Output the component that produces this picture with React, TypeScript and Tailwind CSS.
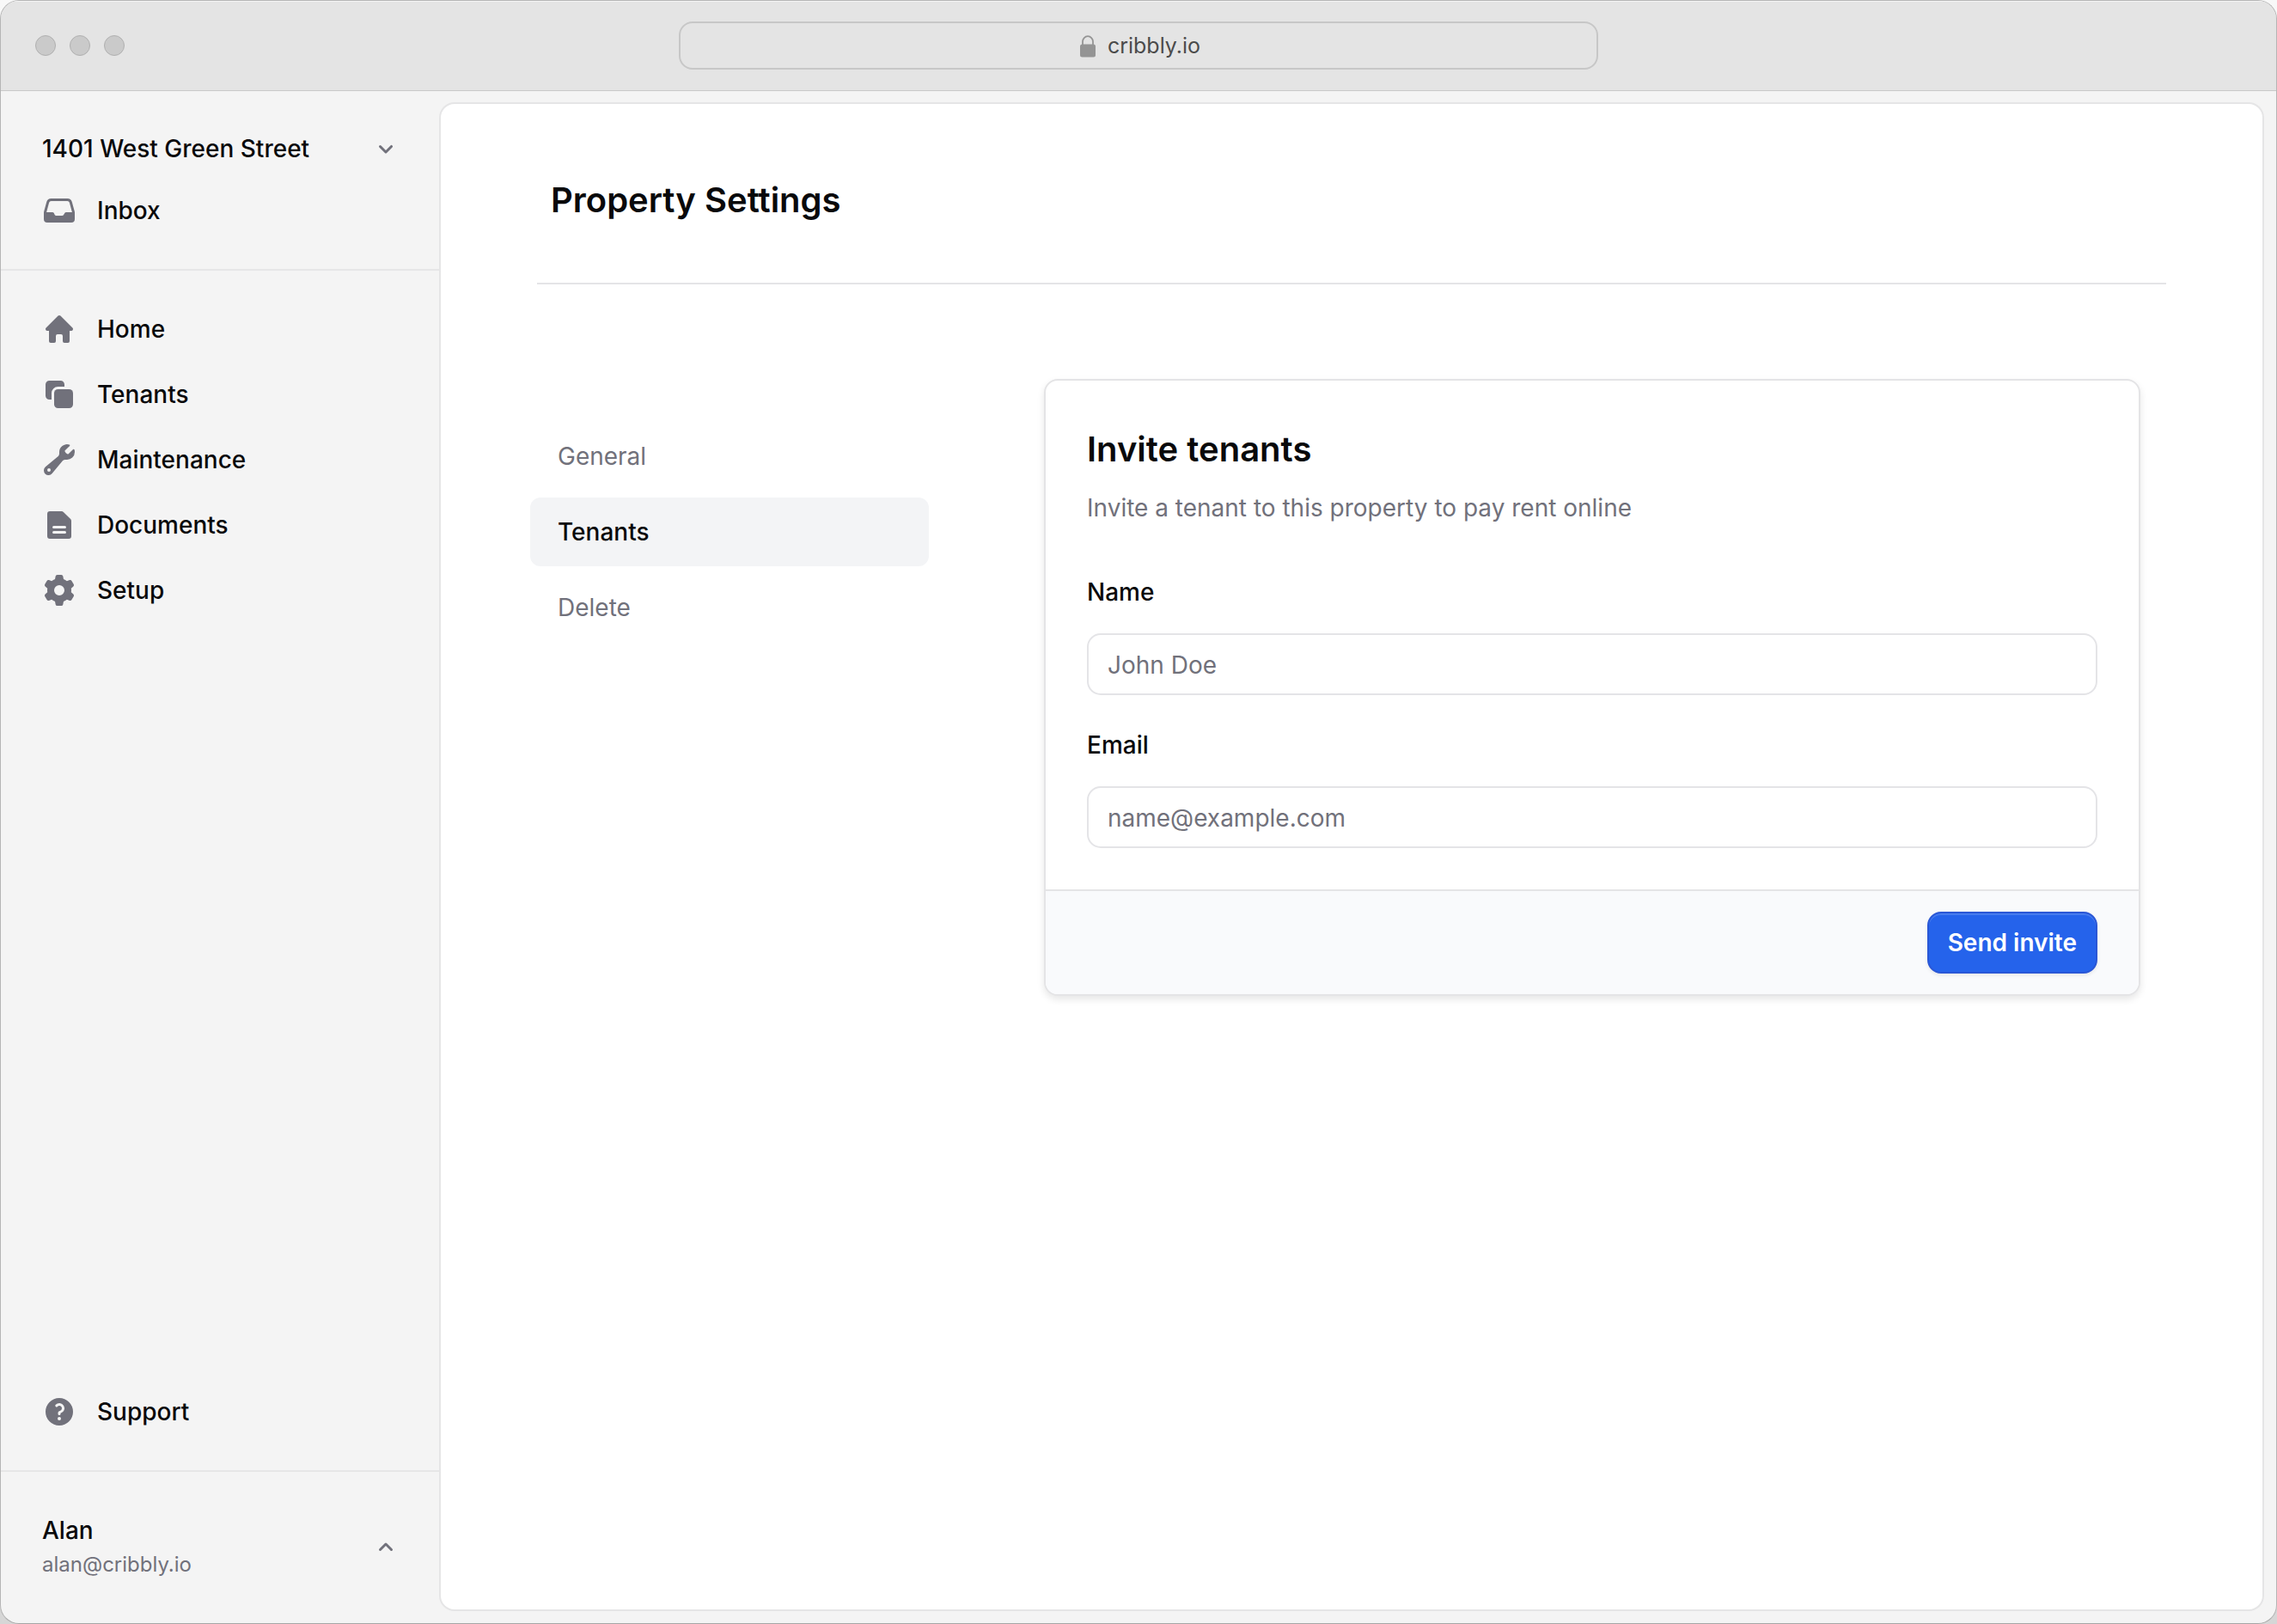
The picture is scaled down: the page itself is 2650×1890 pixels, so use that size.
import type { ComponentType } from "react";
import {
  HiMiniCog6Tooth,
  HiMiniDocumentText,
  HiMiniHome,
  HiMiniInbox,
  HiMiniQuestionMarkCircle,
  HiMiniSquare2Stack,
  HiMiniWrench,
} from "react-icons/hi2";

type Icon = ComponentType<{ className?: string }>;

const mainLinks: { label: string; icon: Icon }[] = [
  { label: "Home", icon: HiMiniHome },
  { label: "Tenants", icon: HiMiniSquare2Stack },
  { label: "Maintenance", icon: HiMiniWrench },
  { label: "Documents", icon: HiMiniDocumentText },
  { label: "Setup", icon: HiMiniCog6Tooth },
];

function SidebarLink({ label, icon: IconComponent }: { label: string; icon: Icon }) {
  return (
    <a href="#" className="flex items-center gap-6 px-4 py-4 leading-10 font-medium">
      <IconComponent className="size-10 shrink-0 text-zinc-500" />
      {label}
    </a>
  );
}

function ChevronDown() {
  return (
    <svg viewBox="0 0 16 16" fill="currentColor" className="size-8 text-zinc-500" aria-hidden="true">
      <path d="M4.22 6.22a.75.75 0 0 1 1.06 0L8 8.94l2.72-2.72a.75.75 0 1 1 1.06 1.06l-3.25 3.25a.75.75 0 0 1-1.06 0L4.22 7.28a.75.75 0 0 1 0-1.06Z" />
    </svg>
  );
}

function ChevronUp() {
  return (
    <svg viewBox="0 0 16 16" fill="currentColor" className="size-8 text-zinc-500" aria-hidden="true">
      <path d="M11.78 9.78a.75.75 0 0 1-1.06 0L8 7.06 5.28 9.78a.75.75 0 0 1-1.06-1.06l3.25-3.25a.75.75 0 0 1 1.06 0l3.25 3.25a.75.75 0 0 1 0 1.06Z" />
    </svg>
  );
}

function LockIcon() {
  return (
    <svg viewBox="0 0 18 26" className="h-[26px] w-[18px]" aria-hidden="true">
      <rect x="0" y="10.5" width="18" height="15" rx="2.5" fill="#949494" />
      <path d="M3 11.5V7.4a6 6.2 0 0 1 12 0v4.1" fill="none" stroke="#949494" strokeWidth="1.8" />
    </svg>
  );
}

function TitleBar() {
  return (
    <header className="relative flex h-[104px] shrink-0 items-center bg-[#e4e4e4] px-10 shadow-[inset_0_1px_0_#f4f4f4,0_1px_0_#c9c9c9]">
      <div className="flex flex-1 gap-4">
        <span className="size-6 rounded-full border border-[#b0b0b0] bg-[#cacaca]" />
        <span className="size-6 rounded-full border border-[#b0b0b0] bg-[#cacaca]" />
        <span className="size-6 rounded-full border border-[#b0b0b0] bg-[#cacaca]" />
      </div>
      <div className="flex h-14 w-full max-w-[1070px] items-center justify-center gap-3.5 rounded-2xl border-2 border-[#c7c7c7] pt-0.5 pl-1 text-[25px] text-[#4b4b4b]">
        <LockIcon />
        cribbly.io
      </div>
      <div className="flex-1" />
    </header>
  );
}

function Sidebar() {
  return (
    <aside className="flex w-[512px] shrink-0 flex-col">
      <div className="border-b-2 border-[#e6e6e7] p-8">
        <button type="button" className="flex w-full items-center justify-between px-4 py-4 leading-10 font-medium">
          1401 West Green Street
          <ChevronDown />
        </button>
        <SidebarLink label="Inbox" icon={HiMiniInbox} />
      </div>
      <nav className="flex flex-1 flex-col gap-1 p-8">
        {mainLinks.map((link) => (
          <SidebarLink key={link.label} {...link} />
        ))}
        <div className="mt-auto">
          <SidebarLink label="Support" icon={HiMiniQuestionMarkCircle} />
        </div>
      </nav>
      <div className="border-t-2 border-[#e6e6e7] p-8">
        <button type="button" className="flex w-full items-center justify-between px-4 py-4 text-left leading-10">
          <span>
            <span className="block font-medium">Alan</span>
            <span className="block text-[24px] leading-10 text-zinc-500">alan@cribbly.io</span>
          </span>
          <ChevronUp />
        </button>
      </div>
    </aside>
  );
}

function Field({ id, label, type, placeholder }: { id: string; label: string; type: string; placeholder: string }) {
  return (
    <div className="flex flex-col gap-6">
      <label htmlFor={id} className="leading-12 font-medium">
        {label}
      </label>
      <input
        id={id}
        type={type}
        placeholder={placeholder}
        className="h-18 w-full rounded-2xl border-2 border-zinc-200 bg-white px-[22px] pt-0.5 placeholder:text-zinc-500"
      />
    </div>
  );
}

function InviteCard() {
  return (
    <form className="min-w-0 flex-1 overflow-hidden rounded-2xl border-2 border-[#e4e4e6] bg-white shadow-[0_4px_8px_rgba(0,0,0,0.1)]">
      <div className="p-12">
        <h2 className="text-[40px] leading-16 font-semibold">Invite tenants</h2>
        <p className="mt-3 leading-12 text-zinc-500">Invite a tenant to this property to pay rent online</p>
        <div className="mt-[50px] flex flex-col gap-[34px]">
          <Field id="name" label="Name" type="text" placeholder="John Doe" />
          <Field id="email" label="Email" type="email" placeholder="name@example.com" />
        </div>
      </div>
      <div className="flex justify-end border-t-2 border-[#e4e4e6] bg-[#f9fafc] px-12 py-6">
        <button
          type="button"
          className="h-18 rounded-2xl border-2 border-[#2a57d6] bg-[#2563eb] px-[22px] font-semibold text-white shadow-[inset_0_2px_0_rgba(255,255,255,0.15),0_2px_4px_rgba(0,0,0,0.08)]"
        >
          Send invite
        </button>
      </div>
    </form>
  );
}

function SettingsNav() {
  return (
    <nav className="flex w-[464px] shrink-0 flex-col gap-2 pt-[50px] text-zinc-500">
      <a href="#" className="rounded-xl px-8 py-5 leading-10">
        General
      </a>
      <a href="#" aria-current="page" className="rounded-xl bg-gray-100 px-8 py-5 leading-10 font-medium text-zinc-950">
        Tenants
      </a>
      <a href="#" className="rounded-xl px-8 py-5 leading-10">
        Delete
      </a>
    </nav>
  );
}

export default function App() {
  return (
    <div className="bg-linear-to-b from-[#f8f8f8] to-[#d6d6d6]">
      <div className="flex min-h-screen flex-col overflow-hidden rounded-[22px] border border-[#b5b5b5] border-b-[#a6a6a6] bg-[#f4f4f4] font-['Inter',sans-serif] text-[28px] text-zinc-950 [font-variant-ligatures:none]">
        <TitleBar />
        <div className="flex flex-1">
          <Sidebar />
          <div className="flex flex-1 pt-4 pr-4 pb-4">
            <main className="flex-1 rounded-2xl bg-white px-26 ring-2 ring-[#e5e5e6]">
              <div className="mx-2 border-b-2 border-zinc-200 px-4 pt-20 pb-16">
                <h1 className="text-[40px] leading-16 font-semibold">Property Settings</h1>
              </div>
              <div className="flex items-start gap-[134px] pt-[110px] pr-[38px]">
                <SettingsNav />
                <InviteCard />
              </div>
            </main>
          </div>
        </div>
      </div>
    </div>
  );
}
